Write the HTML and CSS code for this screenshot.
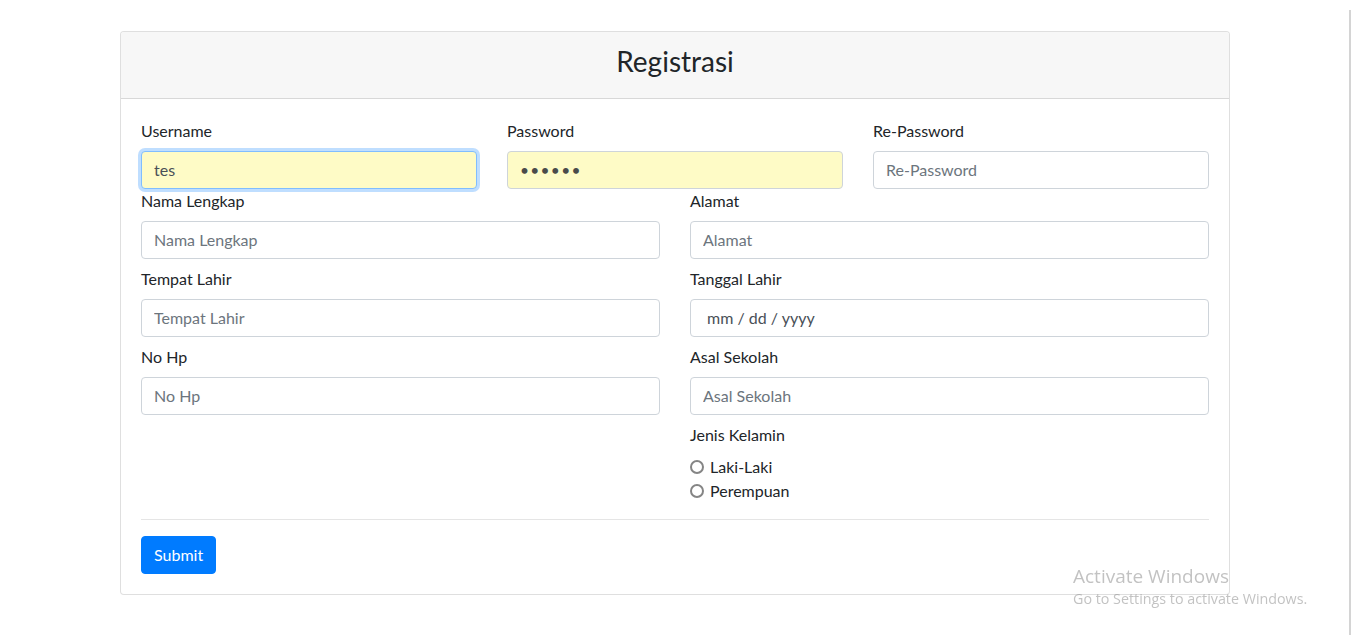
FILE: index.html
```html
<!DOCTYPE html>
<html lang="id">
<head>
<meta charset="utf-8">
<title>Registrasi</title>
<link rel="stylesheet" href="styles.css">
</head>
<body>
<div class="page">
  <form class="card">
    <div class="card-header">
      <h3 class="title">Registrasi</h3>
    </div>
    <div class="card-body">
      <div class="row row-3">
        <div class="field">
          <label class="label" for="username">Username</label>
          <input class="input autofill focused" id="username" type="text" value="tes">
        </div>
        <div class="field">
          <label class="label" for="password">Password</label>
          <input class="input autofill pw" id="password" type="password" value="123456">
        </div>
        <div class="field">
          <label class="label" for="repassword">Re-Password</label>
          <input class="input" id="repassword" type="password" placeholder="Re-Password">
        </div>
      </div>
      <div class="row row-2">
        <div class="col">
          <div class="field">
            <label class="label" for="nama">Nama Lengkap</label>
            <input class="input" id="nama" type="text" placeholder="Nama Lengkap">
          </div>
          <div class="field">
            <label class="label" for="tempat">Tempat Lahir</label>
            <input class="input" id="tempat" type="text" placeholder="Tempat Lahir">
          </div>
          <div class="field">
            <label class="label" for="hp">No Hp</label>
            <input class="input" id="hp" type="text" placeholder="No Hp">
          </div>
        </div>
        <div class="col">
          <div class="field">
            <label class="label" for="alamat">Alamat</label>
            <input class="input" id="alamat" type="text" placeholder="Alamat">
          </div>
          <div class="field">
            <label class="label" for="tanggal">Tanggal Lahir</label>
            <input class="input date" id="tanggal" type="text" value="mm / dd / yyyy" readonly>
          </div>
          <div class="field">
            <label class="label" for="sekolah">Asal Sekolah</label>
            <input class="input" id="sekolah" type="text" placeholder="Asal Sekolah">
          </div>
          <div class="field">
            <span class="label">Jenis Kelamin</span>
            <label class="radio"><input type="radio" name="jk" value="L"><span class="dot"></span>Laki-Laki</label>
            <label class="radio"><input type="radio" name="jk" value="P"><span class="dot"></span>Perempuan</label>
          </div>
        </div>
      </div>
      <hr class="divider">
      <button class="btn" type="submit">Submit</button>
    </div>
  </form>
</div>
<div class="rail"></div>
<div class="watermark">
  <div class="wm-title">Activate Windows</div>
  <div class="wm-sub">Go to Settings to activate Windows.</div>
</div>
</body>
</html>
```

FILE: styles.css
```css
* { box-sizing: border-box; }

html, body {
  margin: 0;
  background: #fff;
}

body {
  font-family: Lato, "Open Sans", "Noto Sans", sans-serif;
  font-size: 16px;
  line-height: 1.5;
  color: #212529;
}

.page {
  padding: 31px 0 40px 120px;
}

.card {
  width: 1110px;
  border: 1px solid rgba(0, 0, 0, 0.125);
  border-radius: 4px;
  background: #fff;
  margin: 0;
}

.card-header {
  background: #f7f7f7;
  border-bottom: 1px solid rgba(0, 0, 0, 0.125);
  border-radius: 3px 3px 0 0;
  padding: 13px 20px 11px;
}

.title {
  margin: 0 0 8px;
  font-size: 28px;
  font-weight: 400;
  line-height: 1.2;
  text-align: center;
  color: #212529;
}

.card-body {
  padding: 20px;
}

.row {
  display: grid;
  column-gap: 30px;
}

.row-3 {
  grid-template-columns: repeat(3, 1fr);
}

.row-2 {
  grid-template-columns: repeat(2, 1fr);
}

.col {
  display: flex;
  flex-direction: column;
  gap: 8px;
}

.field {
  display: flex;
  flex-direction: column;
}

.label {
  display: block;
  margin-bottom: 8px;
  line-height: 24px;
}

.input {
  display: block;
  width: 100%;
  height: 38px;
  padding: 6px 12px;
  font-family: inherit;
  font-size: 16px;
  line-height: 1.5;
  color: #495057;
  background: #fff;
  border: 1px solid #ced4da;
  border-radius: 4px;
  outline: none;
}

.input::placeholder {
  color: #6c757d;
  opacity: 1;
}

.autofill {
  background: #fefbc6;
}

.focused {
  border-color: #80bdff;
  box-shadow: 0 0 0 3px rgba(0, 123, 255, 0.25);
  caret-color: #212529;
}

.pw {
  font-size: 15.5px;
  letter-spacing: 1.3px;
  color: #4a4a4a;
}

.date {
  padding-left: 16px;
}

.radio {
  display: flex;
  align-items: center;
  height: 24px;
  cursor: pointer;
}

.radio input {
  position: absolute;
  opacity: 0;
  width: 0;
  height: 0;
}

.dot {
  width: 14px;
  height: 14px;
  border: 2px solid #858585;
  border-radius: 50%;
  margin-right: 6px;
  background: #fff;
}

.divider {
  margin: 16px 0;
  border: 0;
  border-top: 1px solid rgba(0, 0, 0, 0.1);
}

.btn {
  display: inline-block;
  height: 38px;
  padding: 6px 12px;
  font-family: inherit;
  font-size: 16px;
  line-height: 1.5;
  color: #fff;
  background: #007bff;
  border: 1px solid #007bff;
  border-radius: 4px;
  cursor: pointer;
}

.rail {
  position: fixed;
  top: 10px;
  right: 1px;
  bottom: 0;
  width: 2px;
  background: #d4d4d4;
}

.watermark {
  position: fixed;
  left: 1073px;
  top: 564px;
  color: rgba(120, 120, 120, 0.45);
  font-family: "Open Sans", "Noto Sans", sans-serif;
  pointer-events: none;
}

.wm-title {
  font-size: 19px;
  line-height: 24px;
}

.wm-sub {
  font-size: 14.3px;
  line-height: 22px;
}
```
